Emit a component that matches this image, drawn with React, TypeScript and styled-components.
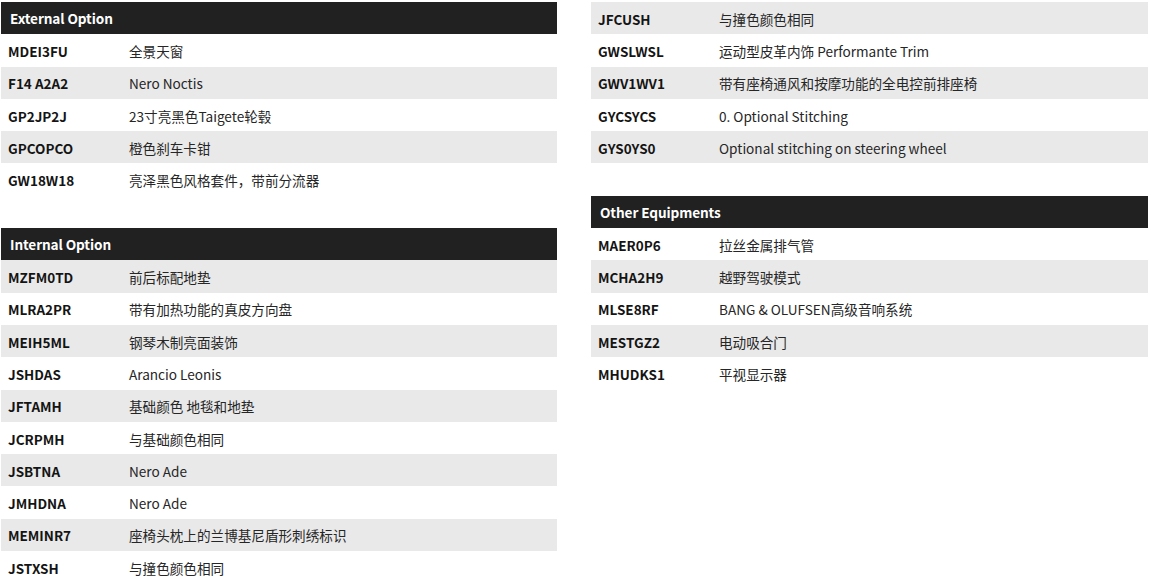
import React from "react";
import styled, { createGlobalStyle } from "styled-components";

const Global = createGlobalStyle`
  html, body { margin: 0; padding: 0; background: #ffffff; }
  body { font-family: "Noto Sans CJK SC", "Noto Sans", sans-serif; }
`;

const Page = styled.div`
  display: grid;
  grid-template-columns: 556px 557px;
  column-gap: 34px;
  padding: 2px 0 0 1px;
  width: 1150px;
  height: 581px;
  box-sizing: border-box;
  overflow: hidden;
`;

const Column = styled.div`
  display: flex;
  flex-direction: column;
`;

const Section = styled.section<{ $gap?: boolean }>`
  display: flex;
  flex-direction: column;
  margin-top: ${(p) => (p.$gap ? "32.3px" : "0")};
`;

const Header = styled.div`
  height: 32.3px;
  box-sizing: border-box;
  display: flex;
  align-items: center;
  padding-left: 9px;
  background: #212121;
  color: #ffffff;
  font-weight: 700;
  font-size: 13.6px;
  letter-spacing: -0.1px;
`;

const Row = styled.div<{ $shade: boolean }>`
  height: 32.3px;
  display: grid;
  grid-template-columns: 121px 1fr;
  align-items: center;
  padding-left: 7px;
  background: ${(p) => (p.$shade ? "#e9e9e9" : "#ffffff")};
`;

const Code = styled.span`
  font-weight: 700;
  font-size: 13.5px;
  color: #141414;
  padding-top: 1px;
`;

const Value = styled.span`
  font-weight: 400;
  font-size: 13.6px;
  color: #262626;
  padding-top: 1px;
`;

type Item = [string, string];

const external: Item[] = [
  ["MDEI3FU", "全景天窗"],
  ["F14 A2A2", "Nero Noctis"],
  ["GP2JP2J", "23寸亮黑色Taigete轮毂"],
  ["GPCOPCO", "橙色刹车卡钳"],
  ["GW18W18", "亮泽黑色风格套件，带前分流器"],
];

const internal: Item[] = [
  ["MZFM0TD", "前后标配地垫"],
  ["MLRA2PR", "带有加热功能的真皮方向盘"],
  ["MEIH5ML", "钢琴木制亮面装饰"],
  ["JSHDAS", "Arancio Leonis"],
  ["JFTAMH", "基础颜色 地毯和地垫"],
  ["JCRPMH", "与基础颜色相同"],
  ["JSBTNA", "Nero Ade"],
  ["JMHDNA", "Nero Ade"],
  ["MEMINR7", "座椅头枕上的兰博基尼盾形刺绣标识"],
  ["JSTXSH", "与撞色颜色相同"],
];

const internalCont: Item[] = [
  ["JFCUSH", "与撞色颜色相同"],
  ["GWSLWSL", "运动型皮革内饰 Performante Trim"],
  ["GWV1WV1", "带有座椅通风和按摩功能的全电控前排座椅"],
  ["GYCSYCS", "0. Optional Stitching"],
  ["GYS0YS0", "Optional stitching on steering wheel"],
];

const other: Item[] = [
  ["MAER0P6", "拉丝金属排气管"],
  ["MCHA2H9", "越野驾驶模式"],
  ["MLSE8RF", "BANG & OLUFSEN高级音响系统"],
  ["MESTGZ2", "电动吸合门"],
  ["MHUDKS1", "平视显示器"],
];

const Rows: React.FC<{ items: Item[]; startShaded?: boolean }> = ({ items, startShaded }) => (
  <>
    {items.map(([c, v], i) => (
      <Row key={c + i} $shade={startShaded ? i % 2 === 0 : i % 2 === 1}>
        <Code>{c}</Code>
        <Value>{v}</Value>
      </Row>
    ))}
  </>
);

export default function App() {
  return (
    <>
      <Global />
      <Page>
        <Column>
          <Section>
            <Header>External Option</Header>
            <Rows items={external} />
          </Section>
          <Section $gap>
            <Header>Internal Option</Header>
            <Rows items={internal} startShaded />
          </Section>
        </Column>
        <Column>
          <Section>
            <Rows items={internalCont} startShaded />
          </Section>
          <Section $gap>
            <Header>Other Equipments</Header>
            <Rows items={other} />
          </Section>
        </Column>
      </Page>
    </>
  );
}
